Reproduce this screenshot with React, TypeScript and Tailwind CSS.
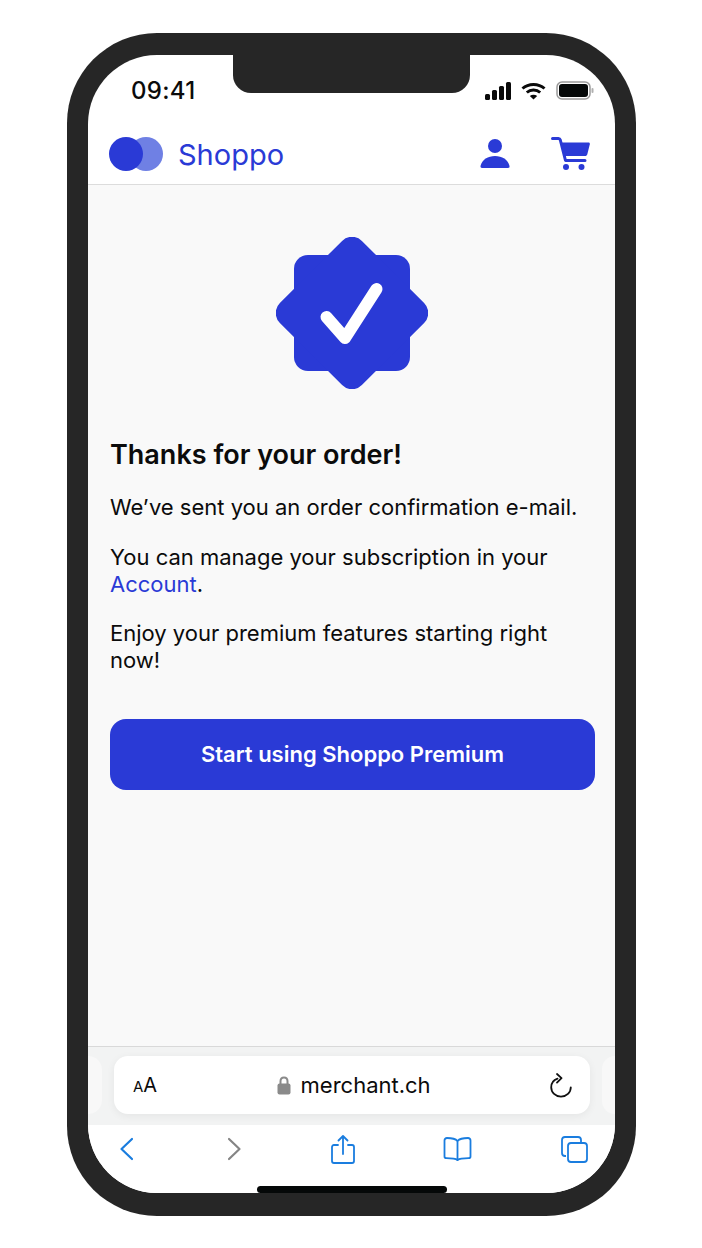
const BLUE = "#2a3ad6";

const StatusIcons = () => (
    <div className="flex flex-row items-center gap-[10px]">
        <svg width="26" height="18" viewBox="0 0 26 18" fill="#0a0a0a">
            <rect x="0" y="12" width="5" height="6" rx="1.5" />
            <rect x="7" y="8" width="5" height="10" rx="1.5" />
            <rect x="14" y="4" width="5" height="14" rx="1.5" />
            <rect x="21" y="0" width="5" height="18" rx="1.5" />
        </svg>
        <svg width="25" height="18" viewBox="0 0 25 18" fill="none" stroke="#0a0a0a" strokeWidth="3">
            <path d="M1.5 6.5C7.5 1 17.5 1 23.5 6.5" />
            <path d="M5.8 10.5C9.5 7.2 15.5 7.2 19.2 10.5" />
            <path d="M12.5 17.5L8.8 14C11 12.2 14 12.2 16.2 14Z" fill="#0a0a0a" stroke="none" />
        </svg>
        <svg width="38" height="19" viewBox="0 0 38 19">
            <rect x="1" y="1" width="33" height="17" rx="5" fill="#fff" stroke="#9a9a9a" strokeWidth="1.5" />
            <rect x="3" y="3" width="29" height="13" rx="3" fill="#050808" />
            <rect x="35.5" y="7" width="2" height="5" rx="1" fill="#b0b0b0" />
        </svg>
    </div>
);

const Logo = () => (
    <svg width="54" height="34" viewBox="0 0 54 34">
        <circle cx="37" cy="17" r="17" fill="#6f80e4" />
        <circle cx="17" cy="17" r="17" fill={BLUE} />
    </svg>
);

const PersonIcon = () => (
    <svg width="30" height="32" viewBox="0 0 30 32" fill={BLUE}>
        <circle cx="15" cy="8" r="7" />
        <path d="M0.5 28C2 21.5 8 18 15 18C22 18 28 21.5 29.5 28C29.7 29.2 29 30 28 30H2C1 30 0.3 29.2 0.5 28Z" />
    </svg>
);

const CartIcon = () => (
    <svg width="39" height="34" viewBox="0 0 39 34" fill="none">
        <path d="M1.5 1.5H7.5C8.5 1.5 9 2 9.3 3L14.5 23.5H34" stroke={BLUE} strokeWidth="3" strokeLinecap="round" strokeLinejoin="round" />
        <path d="M9.5 5.5H37.5C38.4 5.5 39 6.2 38.8 7.2L36.3 17.2C36 18.3 35.3 19 34 19H13.5Z" fill={BLUE} />
        <circle cx="15" cy="30" r="3" fill={BLUE} />
        <circle cx="30.5" cy="30" r="3" fill={BLUE} />
    </svg>
);

const Badge = () => (
    <svg width="152" height="152" viewBox="0 0 152 152">
        <rect x="18" y="18" width="116" height="116" rx="14" fill={BLUE} />
        <rect x="18" y="18" width="116" height="116" rx="14" fill={BLUE} transform="rotate(45 76 76)" />
        <path
            d="M50.5 80L69 101L100.5 52"
            fill="none"
            stroke="#fff"
            strokeWidth="12"
            strokeLinecap="round"
            strokeLinejoin="round"
        />
    </svg>
);

const LockIcon = () => (
    <svg width="14" height="19" viewBox="0 0 14 19">
        <path d="M3.5 8V5.2C3.5 3 5 1.5 7 1.5C9 1.5 10.5 3 10.5 5.2V8" fill="none" stroke="#8a8a8a" strokeWidth="2" />
        <rect x="0.5" y="7.5" width="13" height="11" rx="2" fill="#8a8a8a" />
    </svg>
);

const ReloadIcon = () => (
    <svg width="22" height="25" viewBox="0 0 22 25" fill="none" stroke="#111" strokeWidth="1.8" strokeLinecap="round" strokeLinejoin="round">
        <path d="M7.5 5.6C3.8 6.9 1.2 10.4 1.2 14.3C1.2 19.5 5.5 23.7 11 23.7C16.5 23.7 20.8 19.5 20.8 14.3" />
        <path d="M7 1L11.5 5.2L7 9.6" />
    </svg>
);

const ToolbarIcons = () => (
    <div className="flex flex-row items-center justify-between pl-[31px] pr-[27px] h-[48px]">
        <svg width="17" height="24" viewBox="0 0 17 24" fill="none" stroke="#1a7ddf" strokeWidth="2.2" strokeLinecap="round" strokeLinejoin="round">
            <path d="M13 2L2.5 12L13 22" />
        </svg>
        <svg width="17" height="24" viewBox="0 0 17 24" fill="none" stroke="#858585" strokeWidth="2.2" strokeLinecap="round" strokeLinejoin="round">
            <path d="M4 2L14.5 12L4 22" />
        </svg>
        <svg width="24" height="29" viewBox="0 0 24 29" fill="none" stroke="#1a7ddf" strokeWidth="1.8" strokeLinecap="round" strokeLinejoin="round">
            <path d="M7 10H3C1.8 10 1 10.8 1 12V26C1 27.2 1.8 28 3 28H21C22.2 28 23 27.2 23 26V12C23 10.8 22.2 10 21 10H17" />
            <path d="M12 19V1.5M7.5 5.5L12 1L16.5 5.5" />
        </svg>
        <svg width="29" height="24" viewBox="0 0 29 24" fill="none" stroke="#1a7ddf" strokeWidth="1.8" strokeLinecap="round" strokeLinejoin="round">
            <path d="M14.5 4C12.5 1.8 9 1 4 1C2.5 1 1.5 2 1.5 3.4V19.5C1.5 20.6 2.2 21.2 3.5 21.2C8 21.2 12 21.2 14.5 23C17 21.2 21 21.2 25.5 21.2C26.8 21.2 27.5 20.6 27.5 19.5V3.4C27.5 2 26.5 1 25 1C20 1 16.5 1.8 14.5 4Z" />
            <path d="M14.5 4V23" />
        </svg>
        <svg width="27" height="27" viewBox="0 0 27 27" fill="none" stroke="#1a7ddf" strokeWidth="1.8" strokeLinejoin="round">
            <path d="M5 20H4C2 20 1 19 1 17V4C1 2 2 1 4 1H17C19 1 20 2 20 4V6" />
            <rect x="7" y="7" width="19" height="19" rx="3" />
        </svg>
    </div>
);

export default function App() {
    return (
        <div className="relative h-[1248px] w-[702px] overflow-hidden bg-white pl-[67px] pt-[33px] font-['Inter',sans-serif] text-[#0b0b0b]">
            <div className="relative h-[1183px] w-[569px] rounded-[90px] bg-[#262626] pb-[23px] pl-[21px] pr-[21px] pt-[22px]">
                {/* notch */}
                <div className="absolute left-[166px] top-[22px] h-[38px] w-[237px] rounded-b-[18px] bg-[#262626]" />

                <div className="flex h-full flex-col overflow-hidden rounded-[69px] bg-white">
                    <div className="flex h-[69px] flex-row items-center justify-between pl-[43px] pr-[21px] pt-[2px]">
                        <span className="text-[24px] font-medium leading-none tracking-[0.3px]">09:41</span>
                        <StatusIcons />
                    </div>

                    <header className="flex h-[61px] flex-row items-center border-b border-[#dcdcdc] pl-[21px] pr-[25px]">
                        <Logo />
                        <span className="ml-[15px] text-[29px] leading-none text-[#2a3ad6]">Shoppo</span>
                        <div className="ml-auto flex flex-row items-center gap-[41px]">
                            <PersonIcon />
                            <CartIcon />
                        </div>
                    </header>

                    <main className="flex flex-1 flex-col bg-[#f9f9f9] px-[22px] pt-[52px]">
                        <div className="flex justify-center">
                            <Badge />
                        </div>
                        <h1 className="mt-[47px] text-[27px] font-semibold leading-[38px]">Thanks for your order!</h1>
                        <p className="mt-[20px] text-[22px] leading-[27px]">We’ve sent you an order confirmation e-mail.</p>
                        <p className="mt-[23px] text-[22px] leading-[27px]">
                            You can manage your subscription in your
                            <br />
                            <span className="text-[#2a3ad6]">Account</span>.
                        </p>
                        <p className="mt-[22px] text-[22px] leading-[27px]">
                            Enjoy your premium features starting right
                            <br />
                            now!
                        </p>
                        <button className="mt-[45px] flex h-[71px] w-[485px] items-center justify-center rounded-[16px] bg-[#2a3ad6] text-[22px] font-semibold text-white">
                            Start using Shoppo Premium
                        </button>
                    </main>

                    <div className="border-t border-[#d9d9d9] bg-white">
                        <div className="flex h-[78px] flex-row gap-[12px] bg-[#f2f3f3] pt-[9px]">
                            <div className="h-[58px] w-[14px] rounded-r-[14px] bg-[#f8f8f8]" />
                            <div className="flex h-[58px] w-[476px] flex-row items-center rounded-[14px] bg-white pl-[19px] pr-[18px] shadow-[0_2px_8px_rgba(0,0,0,0.06)]">
                                <span className="flex flex-row items-baseline leading-none">
                                    <span className="text-[15px]">A</span>
                                    <span className="text-[20px]">A</span>
                                </span>
                                <div className="flex flex-1 flex-row items-center justify-center gap-[10px]">
                                    <LockIcon />
                                    <span className="text-[22px] leading-none">merchant.ch</span>
                                </div>
                                <ReloadIcon />
                            </div>
                            <div className="h-[58px] w-[13px] rounded-l-[14px] bg-[#f8f8f8]" />
                        </div>
                        <ToolbarIcons />
                        <div className="flex justify-center pt-[13px]">
                            <div className="h-[7px] w-[190px] rounded-full bg-[#050808]" />
                        </div>
                    </div>
                </div>
            </div>
        </div>
    );
}
